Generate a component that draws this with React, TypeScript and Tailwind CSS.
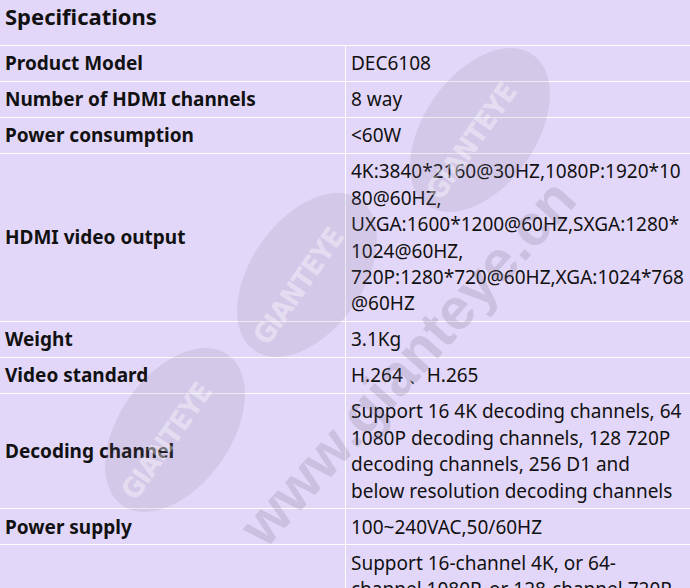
const rows: { label: string; value: React.ReactNode }[] = [
  { label: "Product Model", value: "DEC6108" },
  { label: "Number of HDMI channels", value: "8 way" },
  { label: "Power consumption", value: "<60W" },
  {
    label: "HDMI video output",
    value: (
      <>
        4K:3840*2160@30HZ,1080P:1920*1080@60HZ,
        <br />
        UXGA:1600*1200@60HZ,SXGA:1280*1024@60HZ,
        <br />
        720P:1280*720@60HZ,XGA:1024*768@60HZ
      </>
    ),
  },
  { label: "Weight", value: "3.1Kg" },
  { label: "Video standard", value: "H.264 、H.265" },
  {
    label: "Decoding channel",
    value:
      "Support 16 4K decoding channels, 64 1080P decoding channels, 128 720P decoding channels, 256 D1 and below resolution decoding channels",
  },
  { label: "Power supply", value: "100~240VAC,50/60HZ" },
  {
    label: "Decoding capability",
    value:
      "Support 16-channel 4K, or 64-channel 1080P, or 128-channel 720P, or 256-channel D1 and below resolution decoding",
  },
];

const blobs = [
  { x: 480, y: 130 },
  { x: 307, y: 275 },
  { x: 175, y: 430 },
];

export default function App() {
  return (
    <div
      className="relative h-[588px] w-[690px] overflow-hidden bg-[#e3d7f9] text-[#111111]"
      style={{ fontFamily: '"Noto Sans", "Open Sans", sans-serif' }}
    >
      <div className="flex h-[45px] items-start px-[5px] pt-[1px] text-[22px] font-bold leading-[30px]">
        Specifications
      </div>
      <div className="border-t border-white">
        {rows.map((r, i) => (
          <div
            key={i}
            className="grid grid-cols-[345px_minmax(0,1fr)] border-b border-white text-[19px] leading-[26.4px]"
          >
            <div className="flex items-center px-[5px] py-[4.3px] font-bold">{r.label}</div>
            <div className="min-w-0 break-words border-l border-white py-[4.3px] pl-[5px] pr-[6px]">{r.value}</div>
          </div>
        ))}
      </div>

      {/* watermark */}
      <div className="pointer-events-none absolute inset-0">
        {blobs.map((b, i) => (
          <div
            key={i}
            className="absolute flex h-[112px] w-[184px] -translate-x-1/2 -translate-y-1/2 -rotate-[55deg] items-center justify-center rounded-[50%] bg-[#7d6f8c]/15"
            style={{ left: b.x, top: b.y }}
          >
            <span
              className="-translate-x-[14px] text-[28px] font-bold tracking-tight text-white/40"
              style={{ fontFamily: '"DejaVu Sans Condensed", "Liberation Sans Narrow", sans-serif' }}
            >
              GIANTEYE
            </span>
          </div>
        ))}
        <div
          className="absolute left-[407px] top-[362px] -translate-x-1/2 -translate-y-1/2 -rotate-[48deg] whitespace-nowrap text-[58px] font-bold text-[#6e6478]/20"
          style={{ fontFamily: '"Liberation Sans", sans-serif' }}
        >
          www.gianteye.cn
        </div>
      </div>
    </div>
  );
}
